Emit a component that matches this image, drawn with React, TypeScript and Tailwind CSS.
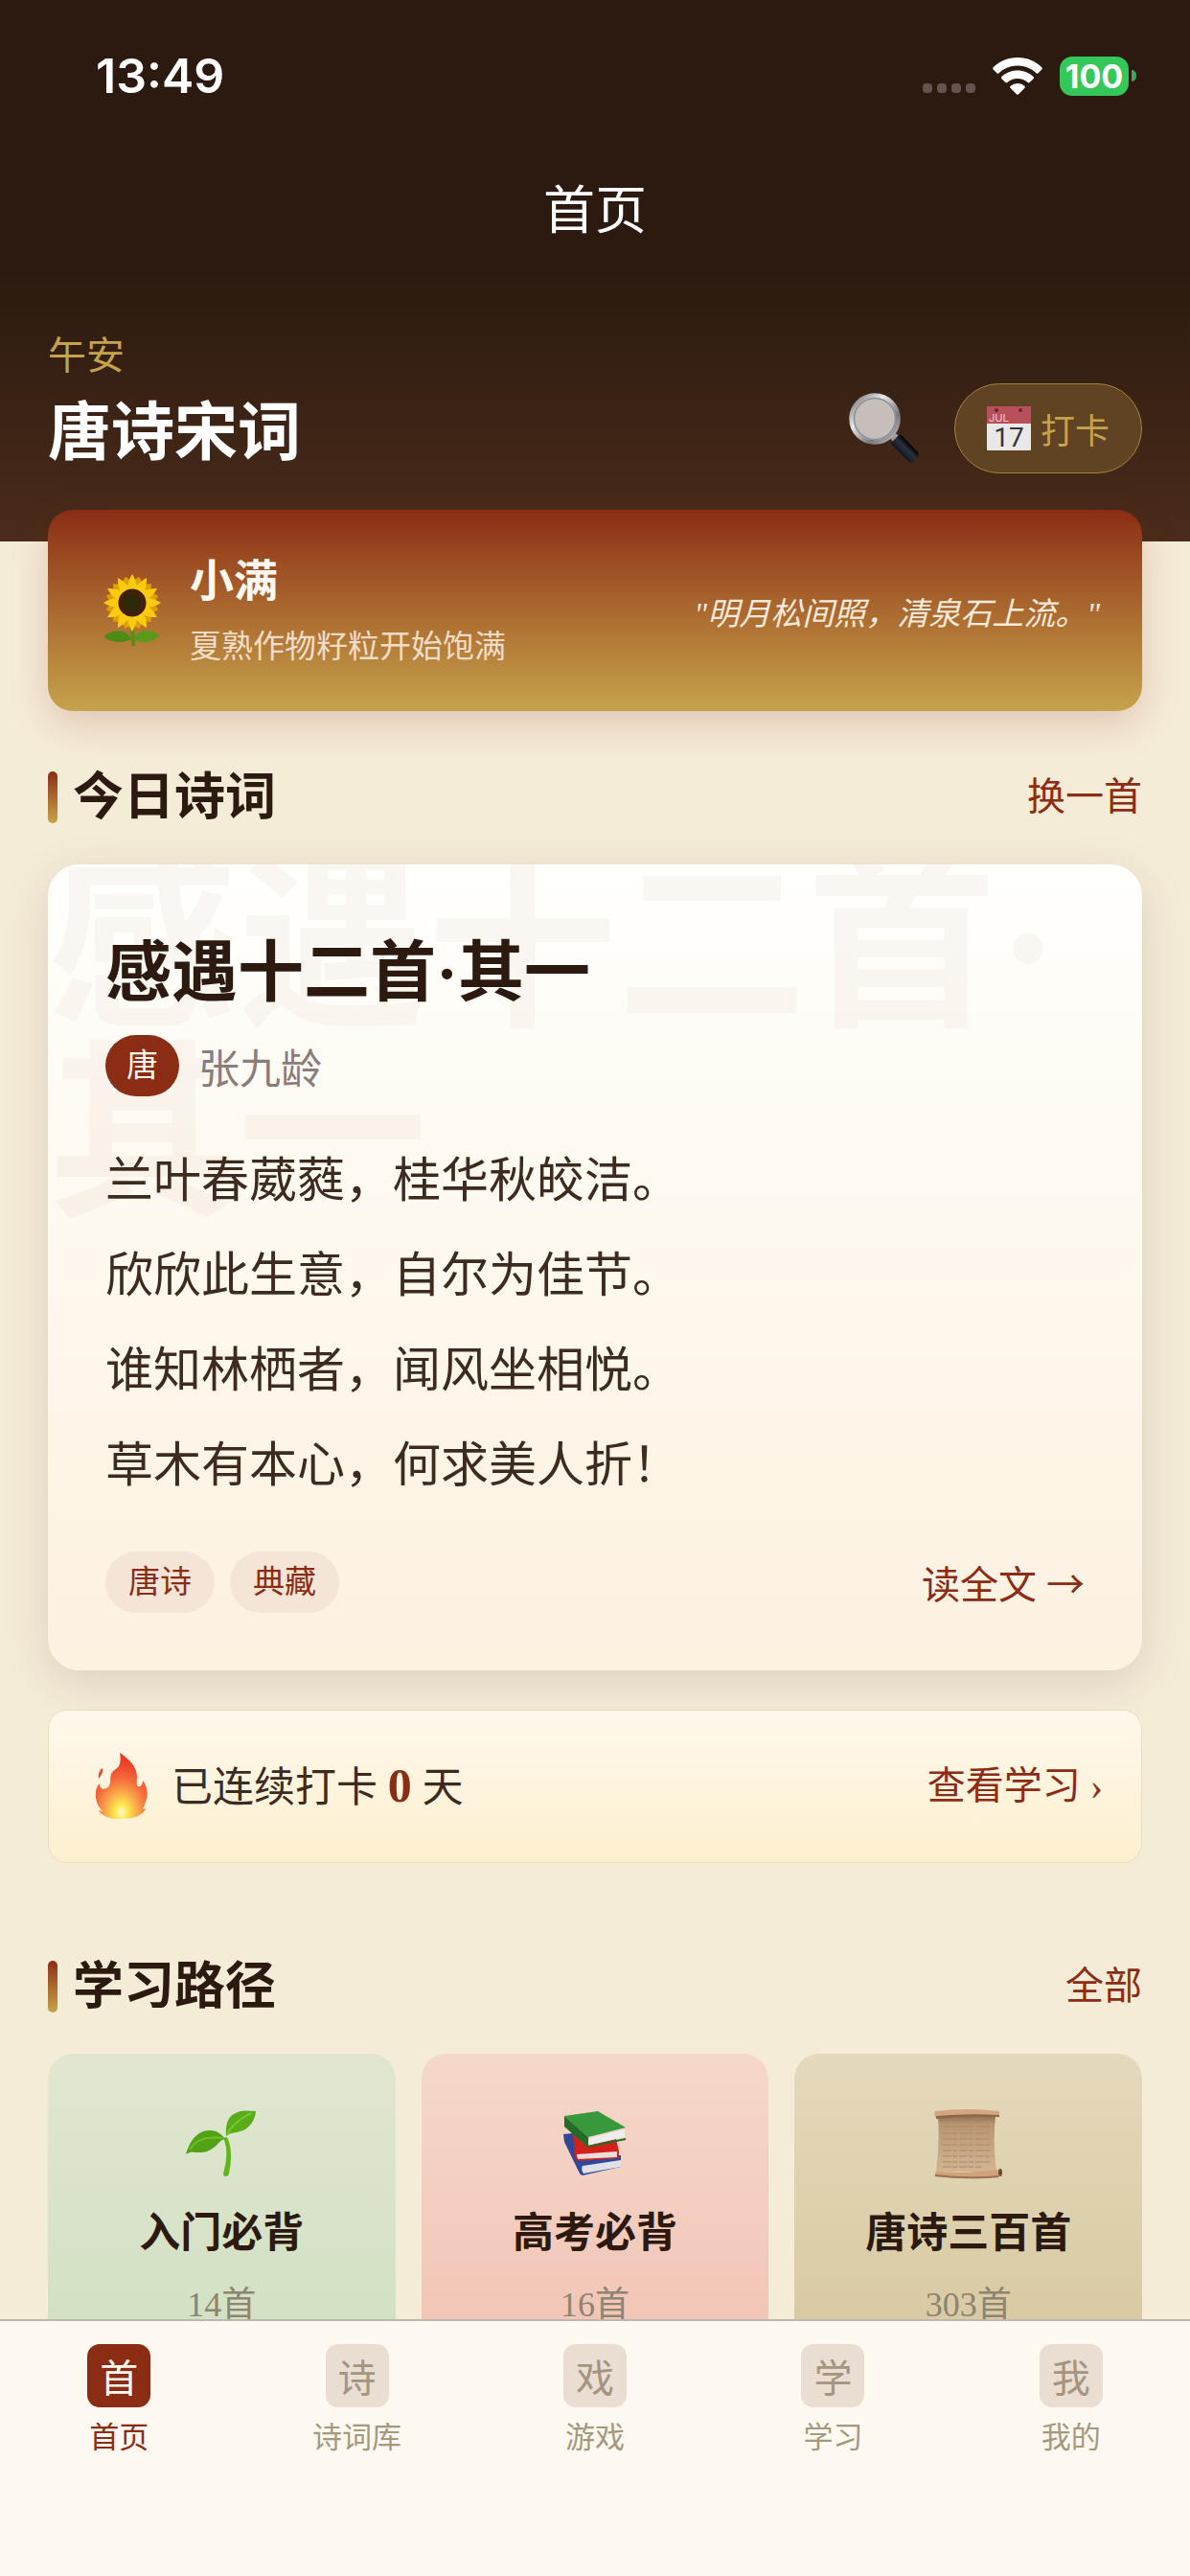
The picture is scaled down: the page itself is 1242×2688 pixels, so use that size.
import React from "react";

const poem = {
  title: "感遇十二首·其一",
  dynasty: "唐",
  author: "张九龄",
  lines: [
    "兰叶春葳蕤，桂华秋皎洁。",
    "欣欣此生意，自尔为佳节。",
    "谁知林栖者，闻风坐相悦。",
    "草木有本心，何求美人折！",
  ],
  tags: ["唐诗", "典藏"],
};

const tabs = [
  { icon: "首", label: "首页", active: true },
  { icon: "诗", label: "诗词库" },
  { icon: "戏", label: "游戏" },
  { icon: "学", label: "学习" },
  { icon: "我", label: "我的" },
];

const WifiIcon = () => (
  <svg width="52" height="39" viewBox="0 0 52 39" fill="#fff">
    <path d="M26 0C36 0 45 4 51.300 10.300a1.500 1.500 0 0 1 0 2.100l-3.700 3.800a1.500 1.500 0 0 1-2.100 0A28 28 0 0 0 26 8.500 28 28 0 0 0 6.500 16.200a1.500 1.500 0 0 1-2.100 0L.700 12.400a1.500 1.500 0 0 1 0-2.100C7 4 16 0 26 0z" />
    <path d="M26 13.500c6.400 0 12.200 2.500 16.500 6.500a1.500 1.500 0 0 1 0 2.200l-3.900 3.800a1.500 1.500 0 0 1-2 0A15.500 15.500 0 0 0 26 22a15.500 15.500 0 0 0-10.600 4 1.500 1.500 0 0 1-2 0l-3.900-3.800a1.500 1.500 0 0 1 0-2.200C13.800 16 19.600 13.500 26 13.500z" />
    <path d="M26 27c2.800 0 5.300 1 7.300 2.700a1.500 1.500 0 0 1 0 2.200l-6.200 6.300a1.500 1.500 0 0 1-2.200 0l-6.200-6.300a1.500 1.500 0 0 1 0-2.200A11.300 11.300 0 0 1 26 27z" />
  </svg>
);

const SearchIcon = () => (
  <svg width="74" height="74" viewBox="0 0 74 74">
    <defs>
      <linearGradient id="rim" x1="0" y1="0" x2="1" y2="1">
        <stop offset="0" stopColor="#6c6c70" />
        <stop offset="0.350" stopColor="#e8e8ea" />
        <stop offset="0.700" stopColor="#77777b" />
        <stop offset="1" stopColor="#c9c9cc" />
      </linearGradient>
      <linearGradient id="handle" x1="0.200" y1="0.800" x2="0.800" y2="0.200">
        <stop offset="0" stopColor="#8d9096" />
        <stop offset="0.250" stopColor="#15181f" />
        <stop offset="0.550" stopColor="#2b323d" />
        <stop offset="0.750" stopColor="#08090c" />
      </linearGradient>
    </defs>
    <path d="M43 47l5-5 5 3-6 7z" fill="#9a9a9e" />
    <path d="M44.500 51.500l7.500-7.500q2-1 4 1l16 17q2 3-1 6l-3 3.500q-3 2.500-6 0L44.500 55q-1.500-2 0-3.500z" fill="url(#handle)" />
    <circle cx="27" cy="27" r="24.500" fill="#c6bebb" stroke="url(#rim)" strokeWidth="4.500" />
    <circle cx="27" cy="27" r="21.500" fill="none" stroke="#8d8f97" strokeWidth="1.500" />
  </svg>
);

const CalendarIcon = () => (
  <svg width="46" height="48" viewBox="0 0 46 48">
    <rect x="0" y="1" width="46" height="46" rx="1" fill="#e9e8e8" />
    <path d="M0 2q0-1 1-1h44q1 0 1 1v17H0z" fill="#b8505c" />
    <circle cx="10" cy="5" r="2" fill="#6b2530" />
    <circle cx="35" cy="5" r="2" fill="#6b2530" />
    <text x="2" y="17" fontSize="11" fill="#f2c9cc" fontFamily="Inter, sans-serif">JUL</text>
    <text x="23" y="43" fontSize="28" fill="#33363b" textAnchor="middle" fontFamily="Roboto, sans-serif">17</text>
  </svg>
);

const SunflowerIcon = () => (
  <svg width="64" height="76" viewBox="0 0 64 76">
    <path d="M30 52h4l1 23h-4z" fill="#5d8a1c" />
    <path d="M31 68C27 58 13 56 2 65c8 7 20 8 29 3z" fill="#4f8a16" />
    <path d="M33 68c4-10 17-12 27-4-6 8-18 9-27 4z" fill="#5a9a1b" />
    {[15, 45, 75, 105, 135, 165, 195, 225, 255, 285, 315, 345].map((angle) => (
      <path key={angle} d="M32 30C22 18 25 8 32 2c7 6 10 16 0 28z" fill="#e0a004" transform={`rotate(${angle} 32 30)`} />
    ))}
    {[0, 30, 60, 90, 120, 150, 180, 210, 240, 270, 300, 330].map((angle) => (
      <path key={angle} d="M32 30C24 18 27 8 32 0c5 8 8 18 0 30z" fill="#fbcb12" transform={`rotate(${angle} 32 30)`} />
    ))}
    <circle cx="32" cy="30" r="14.500" fill="#43200c" />
    <circle cx="32" cy="30" r="9" fill="#2d2a0c" />
  </svg>
);

const FireIcon = () => (
  <svg width="56" height="70" viewBox="0 0 56 70">
    <defs>
      <radialGradient id="flame" cx="0.500" cy="0.900" r="0.800">
        <stop offset="0" stopColor="#fffbe0" />
        <stop offset="0.150" stopColor="#ffe94a" />
        <stop offset="0.350" stopColor="#fbb04c" />
        <stop offset="0.650" stopColor="#f5683c" />
        <stop offset="1" stopColor="#ea3a25" />
      </radialGradient>
    </defs>
    <path d="M26 0C35 6 44 14 44 25c0 5-1 8 1 10 3 1 5-2 5-6 5 6 6 16 3 22-1 4-3 7-3 8l3-1c-1 3-3 5-5 6-5 4-13 5-21 5S13 68 9 65c-3-1-4-3-5-5l4 1C3 56 0 49 1 42c0-4 1-7 4-10 0 5 3 7 7 5 6-3 3-9 5-15 2-4 6-5 8-8 2-4 2-9 1-14z" fill="url(#flame)" />
    <path d="M8 16c1 4-1 7-4 11-1-5 1-9 4-11z" fill="#ee4a2a" />
  </svg>
);

const SproutIcon = () => (
  <svg width="74" height="70" viewBox="0 0 74 70">
    <path d="M39 29c5 10 4 24 0 37 0 4 5 4 6 0 3-15 3-28-2-38z" fill="#5fb51a" />
    <path d="M0 46c4-14 12-25 25-25 8 0 12 4 16 9-6 0-8 9-19 13C13 46 6 41 0 46z" fill="#4fa314" />
    <path d="M4 41c6-9 14-14 34-12" stroke="#6fbd28" strokeWidth="2" fill="none" />
    <path d="M42 27C41 15 44 6 52 3c7-4 14-2 21-2-1 8-4 14-11 19-7 4-14 2-20 7z" fill="#58ad18" />
    <path d="M43 25C49 14 57 8 69 3" stroke="#78c72f" strokeWidth="2" fill="none" />
  </svg>
);

const BooksIcon = () => (
  <svg width="66" height="68" viewBox="0 0 66 68">
    <path d="M0 24l10-1 6 25 44-2v12L20 67q-3-1-4-4L1 32z" fill="#31479a" />
    <path d="M20 57l40-6v7l-39 7q-3-4-1-8z" fill="#dfe1e6" />
    <path d="M10 23l15 13 30-7 3 13v7l-43 3-3-4z" fill="#d2211d" />
    <path d="M14 45l42-3v6l-41 2z" fill="#ecdcda" />
    <path d="M1 5l35-5 29 17-39 10z" fill="#37993a" />
    <path d="M1 5l25 22v11L1 16z" fill="#1f6d26" />
    <path d="M28 28l36-9v8l-37 8q-2-4 1-7z" fill="#eeeeee" />
    <path d="M26 37l39-8" stroke="#1f6d26" strokeWidth="2" />
  </svg>
);

const ScrollIcon = () => (
  <svg width="72" height="74" viewBox="0 0 72 74">
    <defs>
      <linearGradient id="paper" x1="0" y1="0" x2="0" y2="1">
        <stop offset="0" stopColor="#8f6f50" />
        <stop offset="0.150" stopColor="#b89672" />
        <stop offset="1" stopColor="#d3b491" />
      </linearGradient>
    </defs>
    <path d="M4 8h60q-3 28 1 58H2q4-28 2-58z" fill="url(#paper)" />
    <path d="M9 19h51M9 26h51M9 32h50M9 38h51M9 44h50M9 50h52M9 56h51M9 61h40" stroke="#a98a69" strokeWidth="1" strokeDasharray="9 1 5 2" />
    <path d="M1 3q32-4 67 0v5q-32-1-66 2-3-3-1-7z" fill="#d2a67e" />
    <path d="M2 8q32-3 66-1v2q-34-2-66 2z" fill="#8d6548" />
    <path d="M2 66q33 2 65-2l1 8q-34 3-67-1-1-3 1-5z" fill="#cfa27a" />
    <path d="M1 70q33 4 66 1" stroke="#9a7152" strokeWidth="2" fill="none" />
    <ellipse cx="69" cy="67" rx="2" ry="4" fill="#6d4c36" />
  </svg>
);

const paths = [
  { name: "入门必背", count: "14首", icon: <SproutIcon />, bg: "bg-linear-to-b from-[#e2e6d0] to-[#cfe0c1]" },
  { name: "高考必背", count: "16首", icon: <BooksIcon />, bg: "bg-linear-to-b from-[#f5d8ca] to-[#f1c2b3]" },
  { name: "唐诗三百首", count: "303首", icon: <ScrollIcon />, bg: "bg-linear-to-b from-[#e4d9bb] to-[#d7c79e]" },
];

const SectionHeader = ({ title, action }: { title: string; action: string }) => (
  <div className="mb-8 flex items-center justify-between">
    <div className="flex items-center gap-4">
      <span className="h-[54px] w-[10px] rounded-full bg-linear-to-b from-[#8b2c15] to-[#c5a34b]" />
      <h2 className="text-[53px] leading-[76px] font-bold text-[#2c1a10]">{title}</h2>
    </div>
    <button className="text-[40px] leading-[76px] text-[#8b2c15]">{action}</button>
  </div>
);

const App = () => {
  return (
    <div className="flex h-screen flex-col overflow-hidden bg-[#f5ecd8] font-['Liberation_Serif','Noto_Sans_CJK_SC',serif]">
      <header className="bg-[#2c1a10] text-white">
        <div className="flex h-[158px] items-center justify-between pr-14 pl-[100px] font-['Inter',sans-serif]">
          <span className="text-[50px] font-semibold">13:49</span>
          <div className="flex items-center gap-[18px]">
            <div className="flex gap-[5px] pt-[26px]">
              {[1, 2, 3, 4].map((dot) => (
                <span key={dot} className="size-[10px] rounded-[4px] bg-[#63544d]" />
              ))}
            </div>
            <WifiIcon />
            <div className="flex items-center gap-[3px]">
              <span className="flex h-[41px] w-[72px] items-center justify-center rounded-[13px] bg-[#34c759] text-[34px] font-bold">
                100
              </span>
              <span className="h-3 w-[5px] rounded-r-full bg-[#3fa35a]" />
            </div>
          </div>
        </div>
        <h1 className="flex h-[126px] items-center justify-center text-[54px]">首页</h1>
      </header>

      <main className="min-h-0 flex-1 overflow-y-auto [scrollbar-width:none]">
        <div className="flex items-end justify-between bg-linear-to-b from-[#2c1a10] to-[#4a2c1a] px-[50px] pt-[60px] pb-[67px]">
          <div>
            <p className="text-[40px] leading-[56px] text-[#c5a34b]">午安</p>
            <p className="mt-[6px] text-[66px] leading-[92px] font-bold text-white">唐诗宋词</p>
          </div>
          <div className="flex items-center gap-9 pb-1">
            <button aria-label="搜索">
              <SearchIcon />
            </button>
            <button className="flex h-[94px] items-center gap-[10px] rounded-full border border-[#a3823f] bg-[#5f4322] px-[33px] font-['Noto_Sans_CJK_SC',sans-serif] text-[36px] text-[#c5a34b]">
              <CalendarIcon />
              打卡
            </button>
          </div>
        </div>

        <div className="px-[50px] pb-10">
          {/* Solar term banner */}
          <div className="relative -mt-[33px] flex h-[210px] items-center rounded-[26px] bg-linear-to-b from-[#8b2c15] to-[#c5a34b] px-11 text-[#fff8ee] shadow-[0_13px_40px_rgba(139,44,21,0.2)]">
            <div className="mr-4 flex w-[88px] justify-center">
              <SunflowerIcon />
            </div>
            <div className="flex-1">
              <h3 className="text-[46px] leading-[76px] font-bold">小满</h3>
              <p className="text-[33px] leading-[60px] text-[#f3dcc8]">夏熟作物籽粒开始饱满</p>
            </div>
            <p className="pt-[10px] text-[33px] text-[#faeadb] italic">"明月松间照，清泉石上流。"</p>
          </div>

          <section className="mt-[52px]">
            <SectionHeader title="今日诗词" action="换一首" />
            <article className="relative overflow-hidden rounded-[33px] bg-linear-to-b from-[#fffffc] to-[#fdf1e0] p-[60px] shadow-[0_13px_50px_rgba(44,24,16,0.13)]">
              <div
                aria-hidden="true"
                className="absolute inset-x-0 -top-3 text-[198px] leading-[198px] font-bold text-[#8b2c15]/4"
              >
                {poem.title}
              </div>
              <div className="relative">
                <h3 className="text-[69px] leading-[108px] font-bold text-[#2c1a10]">{poem.title}</h3>
                <div className="mt-[10px] flex items-center gap-5">
                  <span className="rounded-full bg-[#8b2c15] px-[22px] text-[33px] leading-[64px] text-[#fff8ee]">
                    {poem.dynasty}
                  </span>
                  <span className="font-['Noto_Sans_CJK_SC',sans-serif] text-[43px] leading-[64px] text-[#8a7d78]">
                    {poem.author}
                  </span>
                </div>
                <div className="mt-[39px] text-[50px] leading-[99px] text-[#3d2b1f]">
                  {poem.lines.map((line) => (
                    <p key={line}>{line}</p>
                  ))}
                </div>
                <div className="mt-10 flex items-center justify-between">
                  <div className="flex gap-4">
                    {poem.tags.map((tag) => (
                      <span
                        key={tag}
                        className="rounded-full bg-[#f5e5d6] px-6 text-[33px] leading-[64px] text-[#8b2c15]"
                      >
                        {tag}
                      </span>
                    ))}
                  </div>
                  <a
                    href="#poem"
                    className="flex gap-[10px] font-['Noto_Sans_CJK_SC',sans-serif] text-[40px] leading-[60px] text-[#8b2c15]"
                  >
                    <span>读全文</span>
                    <span>→</span>
                  </a>
                </div>
              </div>
            </article>
          </section>

          {/* Check-in streak */}
          <div className="relative mt-[41px] flex h-[160px] items-center rounded-[20px] border border-[#eadfbb] bg-linear-to-b from-[#fff8ec] to-[#fdf0cf] px-10">
            <div className="mr-4 flex w-[72px] justify-center">
              <FireIcon />
            </div>
            <p className="flex-1 text-[43px] leading-[64px] text-[#3d2b1f]">
              已连续打卡 <strong className="text-[50px] text-[#8b2c15]">0</strong> 天
            </p>
            <a href="#study" className="text-[40px] leading-[64px] text-[#8b2c15]">
              查看学习 ›
            </a>
          </div>

          <section className="mt-[91px]">
            <SectionHeader title="学习路径" action="全部" />
            <div className="grid grid-cols-3 gap-[27px]">
              {paths.map((path) => (
                <a
                  key={path.name}
                  href="#path"
                  className={`flex flex-col items-center gap-3 rounded-[26px] py-11 ${path.bg}`}
                >
                  <div className="flex h-[100px] items-center">{path.icon}</div>
                  <h3 className="text-[43px] leading-[64px] font-bold text-[#2c1a10]">{path.name}</h3>
                  <p className="text-[36px] leading-[60px] text-[#8d8471]">{path.count}</p>
                </a>
              ))}
            </div>
          </section>
        </div>
      </main>

      <nav className="grid grid-cols-5 border-t-2 border-[#bdb8ab] bg-[#fdf8f0] pt-6 pb-[124px]">
        {tabs.map((tab) => (
          <a key={tab.label} href="#tab" className="flex flex-col items-center gap-3">
            <span
              className={`flex size-[66px] items-center justify-center rounded-[13px] font-['Noto_Sans_CJK_SC',sans-serif] text-[40px] ${
                tab.active ? "bg-[#8b2c15] text-[#fff8ee]" : "bg-[#eaddd2] text-[#a3957f]"
              }`}
            >
              {tab.icon}
            </span>
            <span className={`text-[31px] leading-10 ${tab.active ? "text-[#8b2c15]" : "text-[#a3997f]"}`}>
              {tab.label}
            </span>
          </a>
        ))}
      </nav>
    </div>
  );
};

export default App;
